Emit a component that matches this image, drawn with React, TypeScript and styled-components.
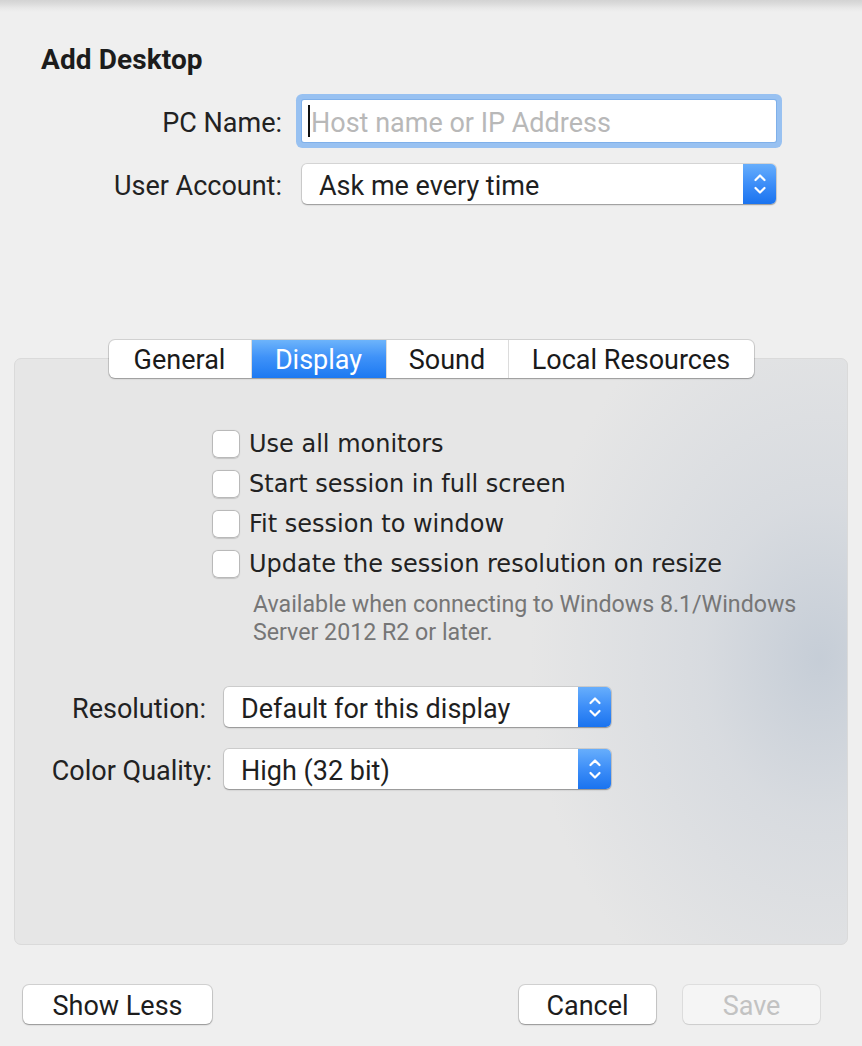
import React from "react";
import styled, { createGlobalStyle } from "styled-components";

const Global = createGlobalStyle`
  html, body { margin: 0; padding: 0; background: #efefef; }
  * { box-sizing: border-box; }
`;

const UI = `Roboto, "Liberation Sans", Arial, sans-serif`;
const LUCIDA = `"DejaVu Sans", "Open Sans", sans-serif`;

const Window = styled.div`
  width: 862px;
  height: 1046px;
  display: flex;
  flex-direction: column;
  background: linear-gradient(to bottom, #d3d3d3 0px, #dcdcdc 4px, #e8e8e8 8px, #efefef 12px, #efefef 100%);
  font-family: ${UI};
  color: #1f1f1f;
  overflow: hidden;
`;

const Title = styled.h1`
  margin: 0;
  padding: 45px 0 0 41px;
  font-size: 28px;
  line-height: 30px;
  font-weight: 700;
  letter-spacing: 0.1px;
  color: #1c1c1c;
`;

const Form = styled.div`
  display: grid;
  grid-template-columns: 282px 474px;
  column-gap: 20px;
  row-gap: 22px;
  margin-top: 25px;
  align-items: center;
`;

const Label = styled.label<{ $pad?: number }>`
  justify-self: end;
  padding-top: 4px;
  padding-right: ${(p) => p.$pad ?? 0}px;
  font-size: 27px;
  line-height: 32px;
  color: #222;
  white-space: nowrap;
`;

const TextField = styled.div`
  height: 42px;
  background: #fff;
  border-radius: 2px;
  box-shadow: 0 0 0 1px #7fb0ea, 0 0 0 6px #98c1f1;
  display: flex;
  align-items: center;
  padding-left: 6px;
  font-size: 27px;
`;

const Caret = styled.span`
  width: 2px;
  height: 32px;
  background: #111;
  margin-right: 1px;
`;

const Placeholder = styled.span`
  padding-top: 4px;
  color: #b8b8b8;
`;

const SelectBox = styled.div`
  height: 40px;
  background: #fff;
  border-radius: 5px;
  box-shadow: 0 0 0 1px rgba(0, 0, 0, 0.1), 0 1px 1.5px rgba(0, 0, 0, 0.3);
  display: flex;
  align-items: stretch;
  font-size: 27px;
  color: #1f1f1f;
  overflow: hidden;
`;

const SelectText = styled.span`
  flex: 1;
  display: flex;
  align-items: center;
  padding: 3px 0 0 17px;
  white-space: nowrap;
`;

const Stepper = styled.span`
  width: 33px;
  background: linear-gradient(to bottom, #67aefc 0%, #3d8ef8 50%, #1a73ef 100%);
  display: flex;
  align-items: center;
  justify-content: center;
`;

const Chevrons = () => (
  <svg width="14" height="26" viewBox="0 0 14 26" fill="none">
    <path d="M2.5 9 L7 4.5 L11.5 9" stroke="#fff" strokeWidth="2.2" strokeLinecap="round" strokeLinejoin="round" />
    <path d="M2.5 17 L7 21.5 L11.5 17" stroke="#fff" strokeWidth="2.2" strokeLinecap="round" strokeLinejoin="round" />
  </svg>
);

const Select = ({ value }: { value: string }) => (
  <SelectBox>
    <SelectText>{value}</SelectText>
    <Stepper>
      <Chevrons />
    </Stepper>
  </SelectBox>
);

const TabView = styled.div`
  margin: 136px 14px 0 14px;
  display: flex;
  flex-direction: column;
  align-items: center;
`;

const Segmented = styled.div`
  position: relative;
  z-index: 1;
  display: flex;
  height: 38px;
  background: #fff;
  border-radius: 6px;
  box-shadow: 0 0 0 1px rgba(0, 0, 0, 0.12), 0 1px 1.5px rgba(0, 0, 0, 0.25);
  overflow: hidden;
`;

const Segment = styled.div<{ $active?: boolean; $w: number }>`
  width: ${(p) => p.$w}px;
  display: flex;
  align-items: center;
  justify-content: center;
  padding-top: 2px;
  font-size: 27px;
  color: ${(p) => (p.$active ? "#fff" : "#1a1a1a")};
  background: ${(p) => (p.$active ? "linear-gradient(to bottom, #6db4fb 0%, #3f92f8 45%, #1c79f2 100%)" : "transparent")};
  & + & {
    border-left: 1px solid #dcdcdc;
  }
`;

const Panel = styled.div`
  align-self: stretch;
  margin-top: -20px;
  height: 587px;
  border-radius: 7px;
  border: 1px solid #dadada;
  background:
    radial-gradient(ellipse 290px 390px at 805px 300px, rgba(196, 204, 214, 0.95) 0%, rgba(208, 213, 220, 0.65) 40%, rgba(229, 229, 229, 0) 100%),
    #e6e6e6;
  padding: 71px 0 0 0;
  display: flex;
  flex-direction: column;
`;

const Checks = styled.div`
  display: flex;
  flex-direction: column;
  gap: 12px;
  padding-left: 197px;
`;

const CheckRow = styled.label`
  display: flex;
  align-items: center;
  gap: 9px;
  height: 28px;
  font-family: ${LUCIDA};
  font-size: 24px;
  color: #222;
  white-space: nowrap;
`;

const Box = styled.span`
  width: 28px;
  height: 28px;
  border-radius: 6px;
  background: #fff;
  box-shadow: inset 0 0 0 1px #b9b9b9, 0 0.5px 1px rgba(0, 0, 0, 0.15);
`;

const Note = styled.p`
  margin: 12px 0 0 238px;
  font-size: 23.2px;
  line-height: 28px;
  color: #767676;
  white-space: nowrap;
`;

const SelectGrid = styled.div`
  display: grid;
  grid-template-columns: 197px 387px;
  column-gap: 12px;
  row-gap: 22px;
  margin-top: 41px;
  align-items: center;
`;

const Footer = styled.div`
  display: flex;
  align-items: center;
  margin-top: 40px;
  padding: 0 42px 0 23px;
  gap: 27px;
`;

const Button = styled.button<{ $w: number; $disabled?: boolean }>`
  width: ${(p) => p.$w}px;
  height: 39px;
  border: none;
  border-radius: 6px;
  font-family: ${UI};
  font-size: 27px;
  padding: 3px 0 0 0;
  color: ${(p) => (p.$disabled ? "#c2c2c2" : "#1d1d1d")};
  background: ${(p) => (p.$disabled ? "#f5f5f5" : "#fff")};
  box-shadow: ${(p) =>
    p.$disabled
      ? "0 0 0 1px rgba(0,0,0,0.07), 0 1px 1px rgba(0,0,0,0.08)"
      : "0 0 0 1px rgba(0,0,0,0.12), 0 1px 1.5px rgba(0,0,0,0.3)"};
`;

const Spacer = styled.div`
  flex: 1;
`;

const checks = [
  "Use all monitors",
  "Start session in full screen",
  "Fit session to window",
  "Update the session resolution on resize",
];

const tabs: { label: string; w: number; active?: boolean }[] = [
  { label: "General", w: 142 },
  { label: "Display", w: 135, active: true },
  { label: "Sound", w: 122 },
  { label: "Local Resources", w: 246 },
];

export default function App() {
  return (
    <>
      <Global />
      <Window>
        <Title>Add Desktop</Title>
        <Form>
          <Label>PC Name:</Label>
          <TextField>
            <Caret />
            <Placeholder>Host name or IP Address</Placeholder>
          </TextField>
          <Label>User Account:</Label>
          <Select value="Ask me every time" />
        </Form>
        <TabView>
          <Segmented>
            {tabs.map((t) => (
              <Segment key={t.label} $w={t.w} $active={t.active}>
                {t.label}
              </Segment>
            ))}
          </Segmented>
          <Panel>
            <Checks>
              {checks.map((c) => (
                <CheckRow key={c}>
                  <Box />
                  {c}
                </CheckRow>
              ))}
            </Checks>
            <Note>
              Available when connecting to Windows 8.1/Windows
              <br />
              Server 2012 R2 or later.
            </Note>
            <SelectGrid>
              <Label $pad={6}>Resolution:</Label>
              <Select value="Default for this display" />
              <Label>Color Quality:</Label>
              <Select value="High (32 bit)" />
            </SelectGrid>
          </Panel>
        </TabView>
        <Footer>
          <Button $w={189}>Show Less</Button>
          <Spacer />
          <Button $w={137}>Cancel</Button>
          <Button $w={137} $disabled>
            Save
          </Button>
        </Footer>
      </Window>
    </>
  );
}
